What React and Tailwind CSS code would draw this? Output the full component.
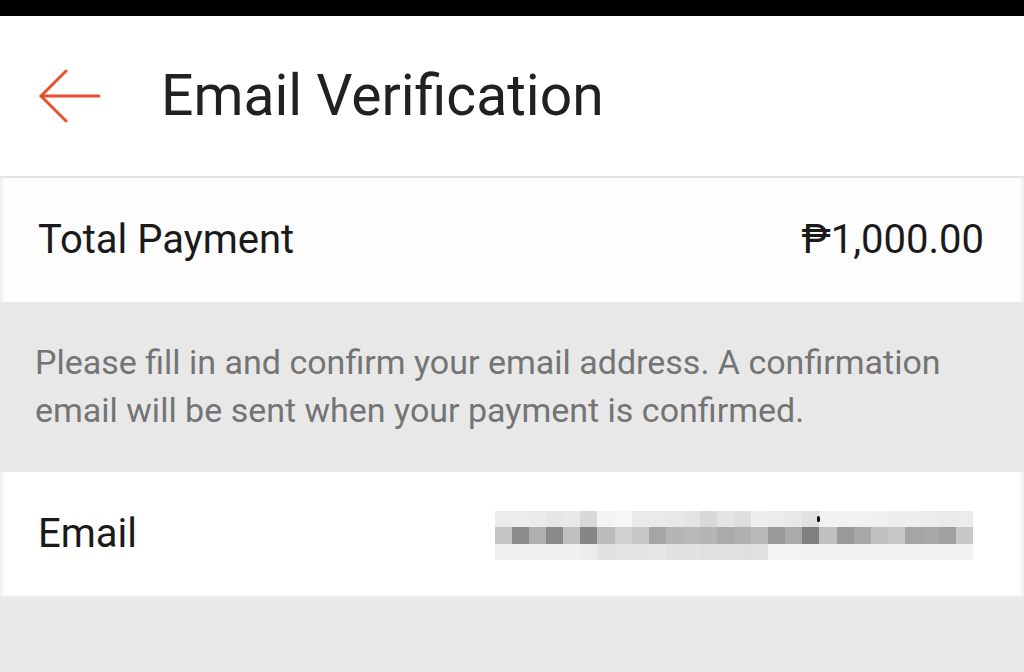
import React from "react";

const mid = ["#c4c4c4","#8c8c8c","#b0b0b0","#8a8a8a","#c0c0c0","#858585","#bbbbbb","#d0d0d0","#c8c8c8","#a5a5a5","#b5b5b5","#b8b8b8","#b5b5b5","#aaaaaa","#b0b0b0","#b8b8b8","#9a9a9a","#aaaaaa","#808080","#c0c0c0","#999999","#a8a8a8","#c0c0c0","#c8c8c8","#a5a5a5","#a8a8a8","#a0a0a0","#c8c8c8"];
const top = ["#ececec","#ececec","#ebebeb","#e6e6e6","#e8e8e8","#d8d8d8","#f4f4f4","#f6f6f6","#eaeaea","#eaeaea","#e8e8e8","#e4e4e4","#d8d8d8","#e4e4e4","#dedede","#eeeeee","#ececec","#e8e8e8","#e0e0e0","#f2f2f2","#f2f2f2","#f2f2f2","#f0f0f0","#eeeeee","#eeeeee","#ececec","#ebebeb","#ececec"];
const bot = ["#efefef","#efefef","#f0f0f0","#f0f0f0","#f0f0f0","#ececec","#e2e2e2","#e4e4e4","#e4e4e4","#e6e6e6","#e2e2e2","#e2e2e2","#e0e0e0","#e0e0e0","#e0e0e0","#e2e2e2","#f4f4f4","#f4f4f4","#f2f2f2","#f2f2f2","#f2f2f2","#f2f2f2","#f2f2f2","#f2f2f2","#f2f2f2","#f2f2f2","#f2f2f2","#f2f2f2"];

function Pixelated() {
  const rows = [top, mid, bot];
  return (
    <div className="relative flex flex-col w-[478px] mt-[4px]">
      {rows.map((r, i) => (
        <div key={i} className={"flex " + (i === 1 ? "h-[17px]" : "h-[16px]")}>
          {r.map((c, j) => (
            <div key={j} className="flex-1" style={{ backgroundColor: c }} />
          ))}
        </div>
      ))}
      <div className="absolute left-[322px] top-[5px] w-[3px] h-[6px] rounded-full bg-[#111]" />
    </div>
  );
}

export default function App() {
  return (
    <div className="w-[1024px] h-[672px] overflow-hidden bg-[#e8e8e8] flex flex-col" style={{ fontFamily: "Roboto, 'DejaVu Sans', sans-serif" }}>
      <div className="h-[16px] bg-black shrink-0" />
      <div className="h-[162px] shrink-0 bg-white border-b-2 border-[#e4e4e4] flex items-center">
        <svg className="ml-[38px] w-[64px] h-[54px]" viewBox="0 0 64 54" fill="none" stroke="#e5512f" strokeWidth="3" strokeLinecap="round" strokeLinejoin="round">
          <path d="M3 27 H61" />
          <path d="M28 2 L3 27 L28 52" />
        </svg>
        <div className="ml-[59px] text-[57px] leading-[64px] text-[#212121]">Email Verification</div>
      </div>
      <div className="h-[124px] shrink-0 bg-[#fdfdfd] border-x-[3px] border-[#f2f2f2] flex items-center justify-between pl-[35px] pr-[37px]">
        <div className="text-[40px] leading-[48px] text-[#1a1a1a]">Total Payment</div>
        <div className="text-[40px] leading-[48px] text-[#1a1a1a]">₱1,000.00</div>
      </div>
      <div className="h-[170px] shrink-0 pl-[35px] pr-[40px] pt-[36px] text-[34px] leading-[48px] text-[#747474]">
        Please fill in and confirm your email address. A confirmation email will be sent when your payment is confirmed.
      </div>
      <div className="h-[125px] shrink-0 bg-white border-x-[3px] border-b-2 border-[#f2f2f2] flex items-center justify-between pl-[35px] pr-[48px]">
        <div className="text-[40px] leading-[48px] text-[#1a1a1a]">Email</div>
        <Pixelated />
      </div>
    </div>
  );
}
